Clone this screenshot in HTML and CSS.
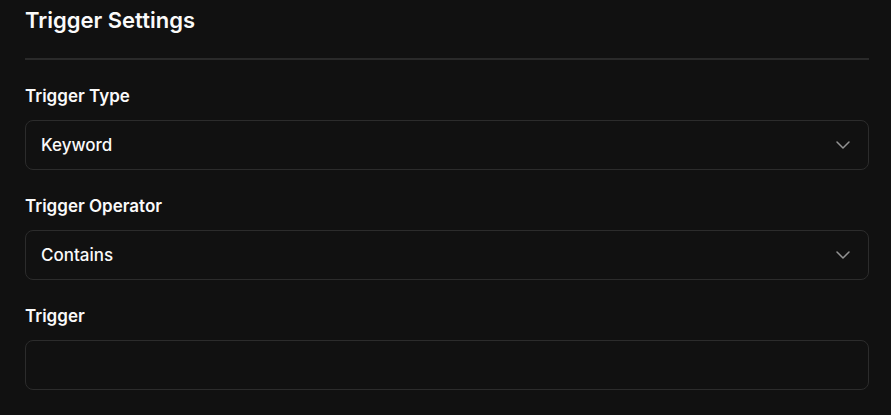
FILE: index.html
```html
<!DOCTYPE html>
<html>
<head>
<meta charset="utf-8">
<link rel="stylesheet" href="styles.css">
</head>
<body>
<div class="panel">
  <h2 class="title">Trigger Settings</h2>
  <div class="fields">
    <div class="field">
      <label class="label">Trigger Type</label>
      <div class="select">
        <span class="value">Keyword</span>
        <svg class="chev" width="24" height="24" viewBox="0 0 24 24" fill="none" stroke="currentColor" stroke-width="1.5" stroke-linecap="round" stroke-linejoin="round"><path d="m6 9 6 6 6-6"/></svg>
      </div>
    </div>
    <div class="field">
      <label class="label">Trigger Operator</label>
      <div class="select">
        <span class="value">Contains</span>
        <svg class="chev" width="24" height="24" viewBox="0 0 24 24" fill="none" stroke="currentColor" stroke-width="1.5" stroke-linecap="round" stroke-linejoin="round"><path d="m6 9 6 6 6-6"/></svg>
      </div>
    </div>
    <div class="field">
      <label class="label">Trigger</label>
      <div class="input"></div>
    </div>
  </div>
</div>
</body>
</html>
```
FILE: styles.css
```css
html, body {
  margin: 0;
  padding: 0;
  background: #111111;
  font-family: Inter, "Noto Sans", sans-serif;
  color: #fafafa;
}
.panel {
  padding: 6px 22px 0 25px;
}
.title {
  margin: 0;
  font-size: 22px;
  line-height: 28px;
  font-weight: 600;
  padding-bottom: 24px;
  border-bottom: 2px solid #2a2a2a;
}
.fields {
  display: flex;
  flex-direction: column;
  gap: 24px;
  padding-top: 24px;
}
.field {
  display: flex;
  flex-direction: column;
  gap: 12px;
}
.label {
  font-size: 17px;
  line-height: 24px;
  font-weight: 600;
}
.select, .input {
  box-sizing: border-box;
  height: 50px;
  border: 1px solid #2c2c2c;
  border-radius: 8px;
  background: #111111;
  display: flex;
  align-items: center;
  justify-content: space-between;
  padding: 0 13px 0 15px;
}
.value {
  font-size: 17px;
  font-weight: 500;
}
.chev {
  color: #939393;
}
```
